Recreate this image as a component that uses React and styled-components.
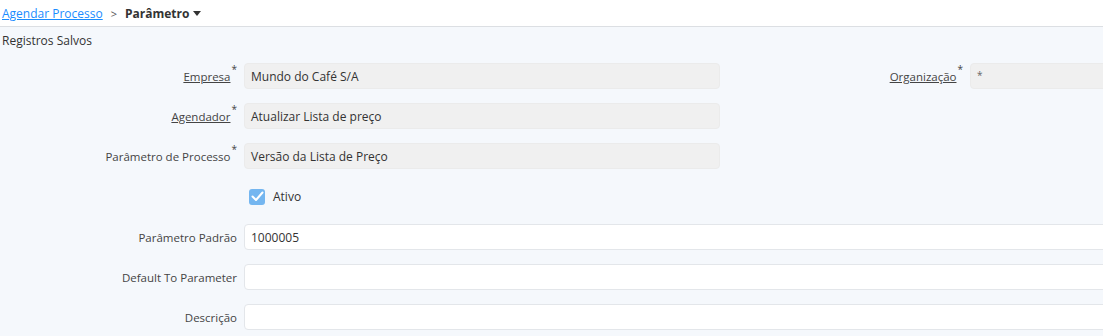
import styled, { createGlobalStyle } from 'styled-components';

const GlobalStyle = createGlobalStyle`
  html, body {
    margin: 0;
    padding: 0;
    background: #f5f8fc;
    overflow: hidden;
  }
  body {
    font-family: "Open Sans", "Noto Sans", sans-serif;
    font-size: 12px;
    color: #333;
  }
`;

const Page = styled.div`
  width: 1103px;
  height: 336px;
  overflow: hidden;
  background: #f5f8fc;
`;

const Breadcrumb = styled.div`
  display: flex;
  align-items: center;
  gap: 8px;
  height: 26px;
  padding-left: 2px;
  background: #fff;
  border-bottom: 1px solid #dcdfe3;
  font-size: 12px;
`;

const Crumb = styled.a`
  color: #1a8cff;
  text-decoration: underline;
  cursor: pointer;
`;

const Sep = styled.span`
  color: #555;
  font-size: 11px;
`;

const Current = styled.span`
  display: flex;
  align-items: center;
  gap: 4px;
  font-weight: 700;
  color: #333;
`;

const Caret = styled.span`
  width: 0;
  height: 0;
  border-left: 4px solid transparent;
  border-right: 4px solid transparent;
  border-top: 5px solid #333;
`;

const SectionTitle = styled.div`
  padding: 6px 0 0 2px;
  height: 22px;
  line-height: 16px;
  color: #333;
`;

const Form = styled.div`
  display: grid;
  grid-template-columns: 237px 476px 236px 400px;
  column-gap: 7px;
  row-gap: 14px;
  padding-top: 8px;
`;

const Label = styled.label`
  display: flex;
  align-items: center;
  justify-content: flex-end;
  height: 26px;
  color: #444;
  font-size: 11.5px;
  white-space: nowrap;

  & > span {
    text-decoration: ${(p) => (p.$link ? 'underline' : 'none')};
  }
`;

const Req = styled.sup`
  font-size: 10px;
  margin-left: 1px;
  align-self: flex-start;
  margin-top: -1px;
  line-height: 14px;
`;

const Field = styled.div`
  box-sizing: border-box;
  height: 26px;
  display: flex;
  align-items: center;
  padding: 0 6px;
  border-radius: 4px;
  background: ${(p) => (p.$readonly ? '#f0f0f0' : '#fff')};
  border: 1px solid ${(p) => (p.$readonly ? '#ebebeb' : '#e3e6ea')};
  color: #333;
  grid-column: ${(p) => (p.$wide ? '2 / -1' : 'auto')};
`;

const Star = styled.span`
  font-size: 10px;
  color: #666;
  margin-top: -2px;
`;

const CheckRow = styled.div`
  grid-column: 2 / 3;
  height: 27px;
  display: flex;
  align-items: center;
  gap: 8px;
  padding-left: 5px;
`;

const Box = styled.span`
  width: 16px;
  height: 16px;
  border-radius: 3px;
  background: #74b6f0;
  display: flex;
  align-items: center;
  justify-content: center;
`;

const ReqLabel = ({ children, link }) => (
  <Label $link={link}>
    <span>{children}</span>
    <Req>*</Req>
  </Label>
);

const App = () => (
  <Page>
    <GlobalStyle />
    <Breadcrumb>
      <Crumb>Agendar Processo</Crumb>
      <Sep>&gt;</Sep>
      <Current>
        Parâmetro <Caret />
      </Current>
    </Breadcrumb>
    <SectionTitle>Registros Salvos</SectionTitle>
    <Form>
      <ReqLabel link>Empresa</ReqLabel>
      <Field $readonly>Mundo do Café S/A</Field>
      <ReqLabel link>Organização</ReqLabel>
      <Field $readonly>
        <Star>*</Star>
      </Field>

      <ReqLabel link>Agendador</ReqLabel>
      <Field $readonly>Atualizar Lista de preço</Field>
      <span />
      <span />

      <ReqLabel>Parâmetro de Processo</ReqLabel>
      <Field $readonly>Versão da Lista de Preço</Field>
      <span />
      <span />

      <span />
      <CheckRow>
        <Box>
          <svg width="13" height="11" viewBox="0 0 13 11">
            <path d="M1.5 5.5 L5 9 L11.5 1.5" fill="none" stroke="#fff" strokeWidth="2" strokeLinecap="round" strokeLinejoin="round" />
          </svg>
        </Box>
        Ativo
      </CheckRow>
      <span />
      <span />

      <Label>Parâmetro Padrão</Label>
      <Field $wide>1000005</Field>

      <Label>Default To Parameter</Label>
      <Field $wide />

      <Label>Descrição</Label>
      <Field $wide />
    </Form>
  </Page>
);

export default App;
